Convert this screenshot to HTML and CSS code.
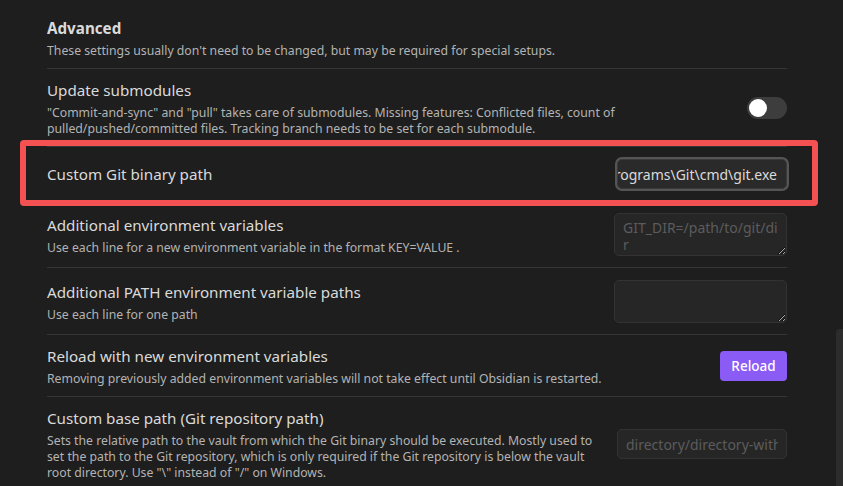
FILE: index.html
```html
<!DOCTYPE html>
<html>
<head>
<meta charset="utf-8">
<link rel="stylesheet" href="styles.css">
</head>
<body>
<div class="page">
  <div class="settings">
    <div class="item heading">
      <div class="info">
        <div class="name bold">Advanced</div>
        <div class="desc">These settings usually don't need to be changed, but may be required for special setups.</div>
      </div>
    </div>

    <div class="item">
      <div class="info">
        <div class="name">Update submodules</div>
        <div class="desc">"Commit-and-sync" and "pull" takes care of submodules. Missing features: Conflicted files, count of pulled/pushed/committed files. Tracking branch needs to be set for each submodule.</div>
      </div>
      <div class="control">
        <div class="toggle"><div class="knob"></div></div>
      </div>
    </div>

    <div class="item highlighted">
      <div class="info">
        <div class="name">Custom Git binary path</div>
      </div>
      <div class="control">
        <div class="input focused"><span class="value">Programs\Git\cmd\git.exe</span></div>
      </div>
    </div>

    <div class="item">
      <div class="info">
        <div class="name">Additional environment variables</div>
        <div class="desc">Use each line for a new environment variable in the format KEY=VALUE .</div>
      </div>
      <div class="control">
        <textarea class="textarea" placeholder="GIT_DIR=/path/to/git/dir"></textarea>
      </div>
    </div>

    <div class="item">
      <div class="info">
        <div class="name">Additional PATH environment variable paths</div>
        <div class="desc">Use each line for one path</div>
      </div>
      <div class="control">
        <textarea class="textarea"></textarea>
      </div>
    </div>

    <div class="item">
      <div class="info">
        <div class="name">Reload with new environment variables</div>
        <div class="desc">Removing previously added environment variables will not take effect until Obsidian is restarted.</div>
      </div>
      <div class="control">
        <button class="btn">Reload</button>
      </div>
    </div>

    <div class="item">
      <div class="info">
        <div class="name">Custom base path (Git repository path)</div>
        <div class="desc">Sets the relative path to the vault from which the Git binary should be executed. Mostly used to set the path to the Git repository, which is only required if the Git repository is below the vault root directory. Use "\" instead of "/" on Windows.</div>
      </div>
      <div class="control">
        <input class="input plain" type="text" placeholder="directory/directory-with-git-repo">
      </div>
    </div>
  </div>
  <div class="scrolltrack"><div class="thumb"></div></div>
</div>
</body>
</html>
```

FILE: styles.css
```css
html, body {
  margin: 0;
  padding: 0;
  background: #1e1e1e;
  overflow: hidden;
}
body {
  font-family: "Noto Sans", "Open Sans", sans-serif;
  color: #dadada;
  width: 843px;
  height: 486px;
}
.page {
  display: flex;
  height: 486px;
}
.settings {
  flex: 1;
  padding: 7px 49px 0 47px;
}
.scrolltrack {
  width: 7px;
  display: flex;
  flex-direction: column;
}
.thumb {
  margin-top: 329px;
  flex: 1;
  background: #2c2c2c;
  border-radius: 4px 0 0 0;
}
.item {
  display: flex;
  align-items: center;
  padding: 12px 0 11px;
  border-top: 1px solid #363636;
}
.item.heading {
  border-top: none;
}
.info {
  flex: 1;
  margin-right: 20px;
}
.name {
  font-size: 15.2px;
  line-height: 19px;
  color: #dadada;
}
.name.bold {
  font-weight: 700;
}
.desc {
  font-size: 12.25px;
  line-height: 16px;
  color: #b3b3b3;
  padding-top: 5px;
  margin-bottom: -2px;
}
.control {
  flex: none;
  display: flex;
  justify-content: flex-end;
}
.toggle {
  width: 40px;
  height: 22px;
  border-radius: 11px;
  background: #3d3d3d;
  display: flex;
  align-items: center;
  padding: 0 2px;
  box-sizing: border-box;
}
.knob {
  width: 18px;
  height: 18px;
  border-radius: 50%;
  background: #ffffff;
}
.highlighted {
  position: relative;
}
.highlighted::after {
  content: "";
  position: absolute;
  top: -7px;
  bottom: -6px;
  left: -27px;
  right: -31px;
  border: 6px solid #f45252;
  border-radius: 4px;
  pointer-events: none;
}
.input {
  box-sizing: border-box;
  width: 170px;
  height: 30px;
  border-radius: 5px;
  font-family: inherit;
  font-size: 14px;
}
.input.focused {
  background: #2a2a2a;
  border: 1px solid #3a3a3a;
  box-shadow: 0 0 0 2px #555555;
  display: flex;
  align-items: center;
  justify-content: flex-end;
  overflow: hidden;
  white-space: nowrap;
  padding: 0 9px;
  color: #dadada;
}
.value {
  flex: none;
}
.input.plain {
  background: #262626;
  border: 1px solid #333333;
  padding: 0 8px;
  color: #dadada;
  outline: none;
}
.input.plain::placeholder {
  color: #5c5c5c;
}
.textarea {
  box-sizing: border-box;
  width: 173px;
  height: 43px;
  background: #262626;
  border: 1px solid #333333;
  border-radius: 5px;
  font-family: inherit;
  font-size: 14px;
  line-height: 17px;
  color: #dadada;
  padding: 5px 8px 0;
  resize: vertical;
  outline: none;
  margin: 0;
  display: block;
}
.textarea::placeholder {
  color: #5c5c5c;
}
.btn {
  width: 67px;
  height: 30px;
  border: none;
  border-radius: 4px;
  background: #8a5cf5;
  color: #ffffff;
  font-family: inherit;
  font-size: 13.5px;
  font-weight: 500;
  padding: 0;
}
```
